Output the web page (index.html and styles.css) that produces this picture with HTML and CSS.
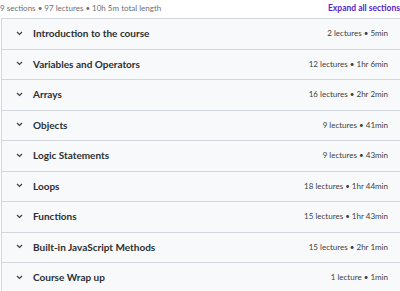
FILE: index.html
```html
<!DOCTYPE html>
<html>
<head>
<meta charset="utf-8">
<link rel="stylesheet" href="styles.css">
</head>
<body>
<div class="page">
  <div class="summary">
    <span class="meta">9 sections • 97 lectures • 10h 5m total length</span>
    <span class="expand">Expand all sections</span>
  </div>
  <div class="sections">
    <div class="row"><span class="chev"><svg width="7" height="5" viewBox="0 0 7 5"><path d="M1 1 L3.5 3.5 L6 1" fill="none" stroke="#3e4143" stroke-width="1.2"/></svg></span><span class="title">Introduction to the course</span><span class="info">2 lectures • 5min</span></div>
    <div class="row"><span class="chev"><svg width="7" height="5" viewBox="0 0 7 5"><path d="M1 1 L3.5 3.5 L6 1" fill="none" stroke="#3e4143" stroke-width="1.2"/></svg></span><span class="title">Variables and Operators</span><span class="info">12 lectures • 1hr 6min</span></div>
    <div class="row"><span class="chev"><svg width="7" height="5" viewBox="0 0 7 5"><path d="M1 1 L3.5 3.5 L6 1" fill="none" stroke="#3e4143" stroke-width="1.2"/></svg></span><span class="title">Arrays</span><span class="info">16 lectures • 2hr 2min</span></div>
    <div class="row"><span class="chev"><svg width="7" height="5" viewBox="0 0 7 5"><path d="M1 1 L3.5 3.5 L6 1" fill="none" stroke="#3e4143" stroke-width="1.2"/></svg></span><span class="title">Objects</span><span class="info">9 lectures • 41min</span></div>
    <div class="row"><span class="chev"><svg width="7" height="5" viewBox="0 0 7 5"><path d="M1 1 L3.5 3.5 L6 1" fill="none" stroke="#3e4143" stroke-width="1.2"/></svg></span><span class="title">Logic Statements</span><span class="info">9 lectures • 43min</span></div>
    <div class="row"><span class="chev"><svg width="7" height="5" viewBox="0 0 7 5"><path d="M1 1 L3.5 3.5 L6 1" fill="none" stroke="#3e4143" stroke-width="1.2"/></svg></span><span class="title">Loops</span><span class="info">18 lectures • 1hr 44min</span></div>
    <div class="row"><span class="chev"><svg width="7" height="5" viewBox="0 0 7 5"><path d="M1 1 L3.5 3.5 L6 1" fill="none" stroke="#3e4143" stroke-width="1.2"/></svg></span><span class="title">Functions</span><span class="info">15 lectures • 1hr 43min</span></div>
    <div class="row"><span class="chev"><svg width="7" height="5" viewBox="0 0 7 5"><path d="M1 1 L3.5 3.5 L6 1" fill="none" stroke="#3e4143" stroke-width="1.2"/></svg></span><span class="title">Built-in JavaScript Methods</span><span class="info">15 lectures • 2hr 1min</span></div>
    <div class="row"><span class="chev"><svg width="7" height="5" viewBox="0 0 7 5"><path d="M1 1 L3.5 3.5 L6 1" fill="none" stroke="#3e4143" stroke-width="1.2"/></svg></span><span class="title">Course Wrap up</span><span class="info">1 lecture • 1min</span></div>
  </div>
</div>
</body>
</html>
```
FILE: styles.css
```css
html, body {
  margin: 0;
  padding: 0;
  background: #ffffff;
  overflow: hidden;
}
.page {
  width: 412px;
  font-family: "Lato", "Liberation Sans", sans-serif;
  color: #2d2f31;
}
.summary {
  display: flex;
  justify-content: space-between;
  align-items: center;
  height: 15px;
  padding-bottom: 3px;
  padding-right: 12px;
  font-size: 8px;
}
.meta {
  color: #6a6f73;
}
.expand {
  color: #5624d0;
  font-weight: 700;
  font-size: 8.5px;
}
.sections {
  margin-left: 1px;
  border-top: 1px solid #d1d7dc;
  border-left: 1px solid #d1d7dc;
}
.row {
  display: flex;
  align-items: center;
  height: 29.5px;
  padding-bottom: 1px;
  box-sizing: border-box;
  height: 30.5px;
  background: #f7f9fa;
  border-bottom: 1px solid #d1d7dc;
  padding-left: 14px;
  padding-right: 24px;
}
.chev {
  display: flex;
  width: 17px;
}
.title {
  flex: 1;
  font-size: 10px;
  font-weight: 700;
}
.info {
  font-size: 8px;
  color: #3e4143;
}
```
